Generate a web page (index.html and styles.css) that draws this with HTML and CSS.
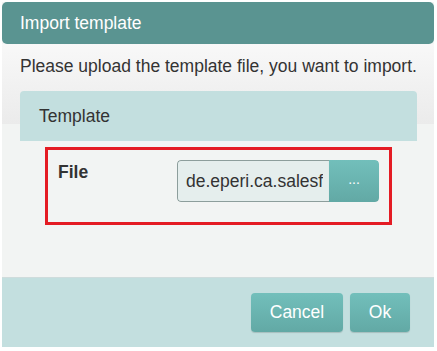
FILE: index.html
```html
<!DOCTYPE html>
<html lang="en">
<head>
    <meta charset="UTF-8">
    <meta name="viewport" content="width=device-width, initial-scale=1.0">
    <title>Import template</title>
    <link rel="stylesheet" href="styles.css">
</head>
<body>
    <div class="dialog">
        <div class="dialog-title">Import template</div>

        <div class="dialog-content">
            <p class="intro">Please upload the template file, you want to import.</p>

            <div class="panel">
                <div class="panel-heading">Template</div>
                <div class="panel-body">
                    <div class="field-row">
                        <label class="field-label" for="fileName">File</label>
                        <div class="file-picker">
                            <input type="text" id="fileName" class="file-name" value="de.eperi.ca.salesf" readonly>
                            <button type="button" class="btn btn-browse">...</button>
                        </div>
                    </div>
                </div>
            </div>
        </div>

        <div class="dialog-footer">
            <button type="button" class="btn">Cancel</button>
            <button type="button" class="btn">Ok</button>
        </div>
    </div>
</body>
</html>
```

FILE: styles.css
```css
:root {
    --header-color: #5a9491;
    --panel-color: #c3dfdf;
    --button-top: #72bfbb;
    --button-bottom: #62a9a5;
    --text-color: #333333;
    --highlight: #e41b23;
}

body {
    margin: 0;
    padding: 2px;
    background-color: #ffffff;
    font-family: "Liberation Sans", Arial, sans-serif;
    font-size: 17.5px;
    color: var(--text-color);
}

.dialog {
    width: 432px;
    height: 345px;
    display: flex;
    flex-direction: column;
    background-color: #f2f4f3;
}

.dialog-title {
    height: 42px;
    flex-shrink: 0;
    display: flex;
    align-items: center;
    padding-left: 18px;
    background-color: var(--header-color);
    border-radius: 5px;
    color: #ffffff;
}

.dialog-content {
    flex: 1;
    padding: 0 17px 0 18px;
    background: linear-gradient(#f8f8f8, #ebebeb) 0 0 / 100% 80px no-repeat;
}

.intro {
    margin: 14px 0 17px;
    line-height: 16px;
}

.panel-heading {
    height: 50px;
    display: flex;
    align-items: center;
    padding-left: 19px;
    background-color: var(--panel-color);
    border-radius: 4px 4px 0 0;
}

.panel-body {
    padding: 6px 25px 0 25px;
}

.field-row {
    height: 62px;
    display: flex;
    align-items: flex-start;
    border: 3px solid var(--highlight);
    padding: 10px 10px 0 10px;
}

.field-label {
    width: 119px;
    padding-top: 2px;
    font-weight: bold;
}

.file-picker {
    display: flex;
    height: 42px;
    width: 202px;
    border-radius: 4px;
    overflow: hidden;
}

.file-name {
    width: 152px;
    box-sizing: border-box;
    margin: 0;
    padding: 0 6px 0 8px;
    border: 1px solid #8d9e9c;
    border-right: none;
    border-radius: 4px 0 0 4px;
    background-color: #e5eeed;
    font: inherit;
    color: var(--text-color);
    outline: none;
}

.btn {
    height: 39px;
    padding: 0 16px;
    border: none;
    border-radius: 4px;
    background: linear-gradient(var(--button-top), var(--button-bottom));
    box-shadow: 0 1px 1px rgba(0, 0, 0, 0.15);
    font: inherit;
    color: #ffffff;
    cursor: pointer;
}

.btn-browse {
    width: 50px;
    height: 42px;
    padding: 0 0 4px;
    border-radius: 0 4px 4px 0;
    font-size: 14px;
}

.dialog-footer {
    height: 70px;
    flex-shrink: 0;
    box-sizing: border-box;
    display: flex;
    justify-content: flex-end;
    align-items: flex-start;
    gap: 7px;
    padding: 15px 24px 0 0;
    background-color: var(--panel-color);
    border-top: 1px solid #cfdcdc;
}

.dialog-footer .btn:first-child {
    width: 92px;
}

.dialog-footer .btn:last-child {
    width: 60px;
}
```
